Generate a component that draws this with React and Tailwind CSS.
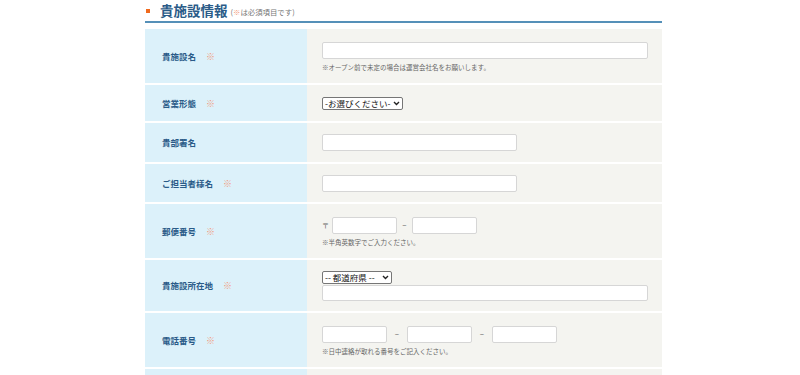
import React from "react";

const F = { fontFamily: '"Noto Sans CJK JP", "Noto Sans", sans-serif' };

function Req() {
  return <span className="ml-[10px] text-[9px] leading-none text-[#f29b7c]">※</span>;
}

function Label({ children, req }) {
  return (
    <div className="w-[162px] shrink-0 bg-[#dcf1fa] pl-[17px] flex items-center">
      <span className="text-[8.5px] font-bold text-[#2a5b88] leading-none">{children}</span>
      {req && <Req />}
    </div>
  );
}

function Input({ w }) {
  return <div className={`${w} h-[17px] bg-white border border-[#d6d6d6] rounded-[2px]`} />;
}

function Note({ children }) {
  return <div className="mt-[5px] text-[6.5px] leading-none text-[#666] whitespace-nowrap">{children}</div>;
}

function Select({ w, children }) {
  return (
    <div className={`${w} h-[13px] bg-white border border-[#767676] rounded-[2px] flex items-center justify-between px-[2px] overflow-hidden`}>
      <span className="text-[8.5px] leading-none text-[#111] whitespace-nowrap">{children}</span>
      <svg width="7" height="5" viewBox="0 0 7 5" className="shrink-0">
        <path d="M1 1 L3.5 3.5 L6 1" stroke="#222" strokeWidth="1.4" fill="none" />
      </svg>
    </div>
  );
}

function Row({ h, label, req, children }) {
  return (
    <div className={`flex ${h} border-b-2 border-white`}>
      <Label req={req}>{label}</Label>
      <div className="flex-1 bg-[#f4f4f0] pl-[15px] flex flex-col justify-center">{children}</div>
    </div>
  );
}

export default function App() {
  return (
    <div className="w-[800px] h-[375px] bg-white overflow-hidden" style={F}>
      <div className="ml-[145px] w-[517px]">
        <div className="h-[23px] flex items-center border-b-2 border-[#5590b8]">
          <div className="w-[4px] h-[4px] bg-[#f06a1d] ml-[1px]" />
          <span className="ml-[10px] text-[13.5px] font-bold leading-none text-[#2a5b88]">貴施設情報</span>
          <span className="ml-[3px] mt-[2px] text-[7.4px] leading-none text-[#777] whitespace-nowrap">
            (<span className="text-[#f29b7c]">※</span>は必須項目です)
          </span>
        </div>
        <div className="mt-[6px]">
          <Row h="h-[56px]" label="貴施設名" req>
            <div className="pt-[1px]">
              <Input w="w-[326px]" />
              <Note>※オープン前で未定の場合は運営会社名をお願いします。</Note>
            </div>
          </Row>
          <Row h="h-[38px]" label="営業形態" req>
            <Select w="w-[81px]">-お選びください-</Select>
          </Row>
          <Row h="h-[41px]" label="貴部署名">
            <Input w="w-[195px]" />
          </Row>
          <Row h="h-[40px]" label="ご担当者様名" req>
            <Input w="w-[195px]" />
          </Row>
          <Row h="h-[56px]" label="郵便番号" req>
            <div className="pt-[0px]">
              <div className="flex items-center">
                <span className="text-[7px] text-[#666] w-[10px]">〒</span>
                <Input w="w-[65px]" />
                <span className="w-[15px] text-center text-[8px] text-[#555]">–</span>
                <Input w="w-[65px]" />
              </div>
              <Note>※半角英数字でご入力ください。</Note>
            </div>
          </Row>
          <Row h="h-[53px]" label="貴施設所在地" req>
            <div>
              <Select w="w-[70px]">-- 都道府県 --</Select>
              <div className="h-[1px]" />
              <div className="w-[326px] h-[16px] bg-white border border-[#d6d6d6] rounded-[2px]" />
            </div>
          </Row>
          <Row h="h-[56px]" label="電話番号" req>
            <div className="pt-[0px]">
              <div className="flex items-center">
                <Input w="w-[65px]" />
                <span className="w-[20px] text-center text-[8px] text-[#555]">–</span>
                <Input w="w-[65px]" />
                <span className="w-[20px] text-center text-[8px] text-[#555]">–</span>
                <Input w="w-[65px]" />
              </div>
              <Note>※日中連絡が取れる番号をご記入ください。</Note>
            </div>
          </Row>
          <div className="flex h-[20px]">
            <div className="w-[162px] bg-[#dcf1fa]" />
            <div className="flex-1 bg-[#f4f4f0]" />
          </div>
        </div>
      </div>
    </div>
  );
}
